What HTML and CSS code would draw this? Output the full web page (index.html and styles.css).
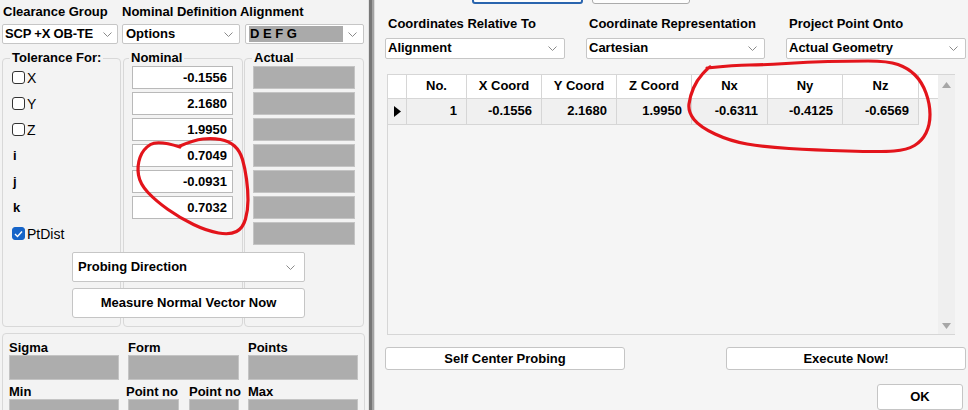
FILE: index.html
```html
<!DOCTYPE html>
<html>
<head>
<meta charset="utf-8">
<link rel="stylesheet" href="styles.css">
</head>
<body>
<div class="app">
  <div class="left">
    <div class="hdr">
      <span class="hl hl1">Clearance Group</span>
      <span class="hl">Nominal Definition Alignment</span>
    </div>
    <div class="ddrow">
      <div class="dd dd1"><span class="ddt">SCP +X OB-TE</span><svg class="chev" width="9" height="5" viewBox="0 0 9 5"><polyline points="0.5,0.5 4.5,4.5 8.5,0.5"/></svg></div>
      <div class="dd dd2"><span class="ddt">Options</span><svg class="chev" width="9" height="5" viewBox="0 0 9 5"><polyline points="0.5,0.5 4.5,4.5 8.5,0.5"/></svg></div>
      <div class="dd dd3"><span class="ddt sel">D E F G</span><svg class="chev" width="9" height="5" viewBox="0 0 9 5"><polyline points="0.5,0.5 4.5,4.5 8.5,0.5"/></svg></div>
    </div>
    <div class="groups">
      <fieldset class="g g1">
        <legend>Tolerance For:</legend>
        <div class="rows">
          <div class="row"><span class="cb"></span><span class="cbl">X</span></div>
          <div class="row"><span class="cb"></span><span class="cbl">Y</span></div>
          <div class="row"><span class="cb"></span><span class="cbl">Z</span></div>
          <div class="row"><span class="lbl">i</span></div>
          <div class="row"><span class="lbl">j</span></div>
          <div class="row"><span class="lbl">k</span></div>
          <div class="row"><span class="cb on"><svg width="9" height="8" viewBox="0 0 9 8"><polyline points="1,4 3.5,6.5 8,1.5"/></svg></span><span class="cbl">PtDist</span></div>
        </div>
      </fieldset>
      <fieldset class="g g2">
        <legend>Nominal</legend>
        <div class="rows">
          <div class="tb">-0.1556</div>
          <div class="tb">2.1680</div>
          <div class="tb">1.9950</div>
          <div class="tb">0.7049</div>
          <div class="tb">-0.0931</div>
          <div class="tb">0.7032</div>
        </div>
      </fieldset>
      <fieldset class="g g3">
        <legend>Actual</legend>
        <div class="rows">
          <div class="gb"></div>
          <div class="gb"></div>
          <div class="gb"></div>
          <div class="gb"></div>
          <div class="gb"></div>
          <div class="gb"></div>
          <div class="gb"></div>
        </div>
      </fieldset>
      <div class="probe">
        <div class="dd ddp"><span class="ddt">Probing Direction</span><svg class="chev" width="9" height="5" viewBox="0 0 9 5"><polyline points="0.5,0.5 4.5,4.5 8.5,0.5"/></svg></div>
        <div class="btn bp">Measure Normal Vector Now</div>
      </div>
    </div>
    <div class="stats">
      <span class="sl c1">Sigma</span>
      <span class="sl c2">Form</span>
      <span class="sl c4">Points</span>
      <div class="gb s c1"></div>
      <div class="gb s c2"></div>
      <div class="gb s c4"></div>
      <span class="sl c1">Min</span>
      <span class="sl c2a">Point no</span>
      <span class="sl c3">Point no</span>
      <span class="sl c4">Max</span>
      <div class="gb s c1"></div>
      <div class="gb s c2a"></div>
      <div class="gb s c3"></div>
      <div class="gb s c4"></div>
    </div>
  </div>
  <div class="divider"></div>
  <div class="right">
    <div class="tabs"><div class="tab a"></div><div class="tab b"></div></div>
    <div class="coords">
      <span class="cl">Coordinates Relative To</span>
      <span class="cl">Coordinate Representation</span>
      <span class="cl">Project Point Onto</span>
      <div class="dd"><span class="ddt">Alignment</span><svg class="chev" width="9" height="5" viewBox="0 0 9 5"><polyline points="0.5,0.5 4.5,4.5 8.5,0.5"/></svg></div>
      <div class="dd"><span class="ddt">Cartesian</span><svg class="chev" width="9" height="5" viewBox="0 0 9 5"><polyline points="0.5,0.5 4.5,4.5 8.5,0.5"/></svg></div>
      <div class="dd"><span class="ddt">Actual Geometry</span><svg class="chev" width="9" height="5" viewBox="0 0 9 5"><polyline points="0.5,0.5 4.5,4.5 8.5,0.5"/></svg></div>
    </div>
    <div class="grid">
      <div class="cells">
        <div class="hrow">
          <div class="c rh"></div>
          <div class="c w60">No.</div>
          <div class="c w75">X Coord</div>
          <div class="c w75">Y Coord</div>
          <div class="c w75">Z Coord</div>
          <div class="c w76">Nx</div>
          <div class="c w75">Ny</div>
          <div class="c w76">Nz</div>
          <div class="hfill"></div>
        </div>
        <div class="drow">
          <div class="c rh"><svg width="7" height="11" viewBox="0 0 7 11"><polygon points="0,0 7,5.5 0,11"/></svg></div>
          <div class="c w60">1</div>
          <div class="c w75">-0.1556</div>
          <div class="c w75">2.1680</div>
          <div class="c w75">1.9950</div>
          <div class="c w76">-0.6311</div>
          <div class="c w75">-0.4125</div>
          <div class="c w76">-0.6569</div>
        </div>
      </div>
      <div class="sbar">
        <svg width="9" height="6" viewBox="0 0 9 6"><polygon points="0,6 4.5,0 9,6"/></svg>
        <svg width="9" height="6" viewBox="0 0 9 6"><polygon points="0,0 4.5,6 9,0"/></svg>
      </div>
    </div>
    <div class="btnrow">
      <div class="btn b1">Self Center Probing</div>
      <div class="btn b2">Execute Now!</div>
    </div>
    <div class="okrow"><div class="btn ok">OK</div></div>
  </div>
</div>
<svg class="ink" width="968" height="410" viewBox="0 0 968 410">
  <path d="M180,147 Q158,140 150.5,144.5 Q143,149 140,157.5 Q137,166 138.5,175 Q140,184 148,192.5 Q156,201 168,209.5 Q180,218 193.5,224.5 Q207,231 218.5,233 Q230,235 236.5,231.5 Q243,228 245.5,219 Q248,210 248,200 Q248,190 246.5,179 Q245,168 242.5,159.5 Q240,151 234.5,146 Q229,141 220.5,139.5 Q212,138 203,139 Q194,140 180,146"/>
  <path d="M707,68 Q735,65 749.5,65 Q764,65 786,63.5 Q808,62 828,61.5 Q848,61 868,61 Q888,61 898,64.5 Q908,68 915,75 Q922,82 926,93 Q930,104 930,114.5 Q930,125 926,133 Q922,141 914.5,145.5 Q907,150 894,151 Q881,152 847.5,151 Q814,150 789,148.5 Q764,147 747,144 Q730,141 715,134 Q700,127 694,119.5 Q688,112 689,104 Q690,96 693.5,88 Q697,80 702.5,74 T710,67"/>
</svg>
</body>
</html>
```
FILE: styles.css
```css
* { box-sizing: border-box; }
html, body { margin: 0; padding: 0; }
body {
  width: 968px;
  height: 410px;
  overflow: hidden;
  position: relative;
  font: bold 13px/14px "Liberation Sans", Arial, sans-serif;
  color: #000;
  background: #f5f5f5;
}
.app { display: flex; height: 410px; }

/* ---------- left panel ---------- */
.left {
  width: 368px;
  flex: none;
  background: #f3f3f3;
  overflow: hidden;
}
.divider {
  width: 7px;
  flex: none;
  background: linear-gradient(to right, #e2e2e2 0, #e2e2e2 1px, #777 1px, #777 4px, #a3a3a3 4px, #a3a3a3 6px, #dcdcdc 6px);
}
.hdr { display: flex; padding: 5px 0 0 3px; height: 18px; }
.hl1 { width: 119px; }

.ddrow { display: flex; margin-top: 6px; padding-left: 2px; }
.dd {
  height: 20px;
  background: #fff;
  border: 1px solid #c6c6c6;
  border-radius: 2px;
  display: flex;
  align-items: center;
  padding: 0 6px 0 3px;
}
.ddt { flex: 1; white-space: nowrap; overflow: hidden; }
.chev { flex: none; }
.chev polyline { fill: none; stroke: #8a8a8a; stroke-width: 1; }
.dd1 { width: 116px; padding-left: 2px; padding-right: 5px; }
.dd1 .ddt { letter-spacing: -0.2px; }
.dd2 { width: 118px; margin-left: 4px; }
.dd3 { width: 119px; margin-left: 5px; }
.sel { background: #aaaaaa; flex: none; width: 94px; margin-right: auto; padding-left: 1px; line-height: 16px; }

.groups {
  display: grid;
  grid-template-columns: 119px 2px 120px 1px 120px;
  grid-template-rows: 202px 75px;
  margin: 6px 0 0 2px;
}
.g {
  margin: 0;
  padding: 0 0 0 8px;
  border: 1px solid #d8d8d8;
  border-radius: 4px;
  grid-row: 1 / 3;
  min-width: 0;
}
.g legend { padding: 0 2px; margin-left: -1px; line-height: 16px; }
.g2 legend { margin-left: -3px; }
.g1 { grid-column: 1; }
.g2 { grid-column: 3; }
.g3 { grid-column: 5; }

.rows { display: flex; flex-direction: column; gap: 3px; }
.row { height: 23px; display: flex; align-items: center; }
.cb {
  width: 13px; height: 13px;
  border: 1px solid #333;
  border-radius: 3px;
  background: #fff;
  display: flex; align-items: center; justify-content: center;
  margin-left: 1px;
}
.cb.on { background: #1664c8; border-color: #1664c8; }
.cb svg polyline { fill: none; stroke: #fff; stroke-width: 1.4; }
.cbl { font-weight: normal; margin-left: 2px; font-size: 14px; }
.lbl { margin-left: 2px; }

.tb {
  width: 101px; height: 23px;
  background: #fff;
  border: 1px solid #b9b9b9;
  text-align: right;
  padding-right: 5px;
  line-height: 21px;
}
.gb {
  width: 102px; height: 23px;
  background: #adadad;
  border: 1px solid #c4c4c4;
}

.probe {
  grid-row: 2;
  grid-column: 1 / -1;
  margin-left: 70px;
  width: 233px;
  display: flex;
  flex-direction: column;
  gap: 6px;
}
.ddp { height: 30px; padding-left: 5px; padding-right: 9px; }
.btn {
  background: #fff;
  border: 1px solid #c5c5c5;
  border-radius: 3px;
  display: flex;
  align-items: center;
  justify-content: center;
}
.bp { height: 30px; }

.stats {
  margin: 6px 0 0 2px;
  width: 363px;
  height: 90px;
  border: 1px solid #d8d8d8;
  border-radius: 4px;
  padding: 6px 0 0 6px;
  display: grid;
  grid-template-columns: 110px 9px 51px 10px 50px 9px 110px;
  grid-template-rows: 15px 25px 19px 25px;
}
.sl { align-self: end; white-space: nowrap; line-height: 14px; }
.gb.s { width: auto; height: 25px; }
.c1 { grid-column: 1; }
.c2 { grid-column: 3 / 6; }
.c2a { grid-column: 3; }
.c3 { grid-column: 5; }
.c4 { grid-column: 7; }
.sl.c2a { margin-left: -2px; }

/* ---------- right panel ---------- */
.right {
  flex: 1;
  min-width: 0;
  padding: 0 2px 0 10px;
  display: flex;
  flex-direction: column;
  background: #f5f5f5;
}
.tabs { height: 4px; display: flex; align-items: flex-end; overflow: hidden; padding-left: 87px; gap: 9px; }
.tab { height: 14px; flex: none; border: 1px solid #ababab; border-radius: 3px; background: #fdfdfd; }
.tab.a { width: 111px; border: 2px solid #2a65ae; }
.tab.b { width: 98px; }

.coords {
  display: grid;
  grid-template-columns: 180px 179px 180px;
  column-gap: 21px;
  row-gap: 7px;
  margin-top: 13px;
}
.cl { padding-left: 3px; white-space: nowrap; }
.coords .dd { height: 21px; padding-left: 2px; padding-right: 7px; }

.grid {
  margin: 15px 0 0 2px;
  width: 568px;
  height: 265px;
  border: 1px solid #d6d6d6;
  border-right: none;
  background: #f5f5f5;
  display: flex;
}
.cells { flex: 1; }
.hrow { display: flex; height: 24px; background: #fff; border-bottom: 1px solid #d6d6d6; }
.hfill { flex: 1; }
.drow { display: flex; height: 26px; }
.c {
  flex: none;
  border-right: 1px solid #d6d6d6;
  display: flex;
  align-items: center;
}
.hrow .c { justify-content: center; }
.drow .c { justify-content: flex-end; padding-right: 9px; background: #f0f0f0; border-bottom: 1px solid #d6d6d6; }
.c.rh { width: 19px; }
.hrow .c.rh { padding: 0; }
.drow .c.rh { justify-content: center; padding: 0; }
.rh polygon { fill: #000; }
.w60 { width: 60px; }
.w75 { width: 75px; }
.w76 { width: 76px; }
.sbar {
  width: 17px;
  flex: none;
  background: #efefef;
  display: flex;
  flex-direction: column;
  justify-content: space-between;
  align-items: center;
  padding: 7px 0 5px;
}
.sbar polygon { fill: #a6a6a6; }

.btnrow { display: flex; justify-content: space-between; margin-top: 12px; }
.btnrow .btn { height: 23px; }
.b1 { width: 240px; }
.b2 { width: 240px; }
.okrow { display: flex; justify-content: flex-end; margin-top: 14px; padding-right: 3px; }
.ok { width: 86px; height: 26px; }

/* ---------- hand-drawn annotation ---------- */
.ink { position: absolute; left: 0; top: 0; pointer-events: none; }
.ink path { fill: none; stroke: #e3141b; stroke-width: 3.2; stroke-linecap: round; stroke-linejoin: round; }
```
